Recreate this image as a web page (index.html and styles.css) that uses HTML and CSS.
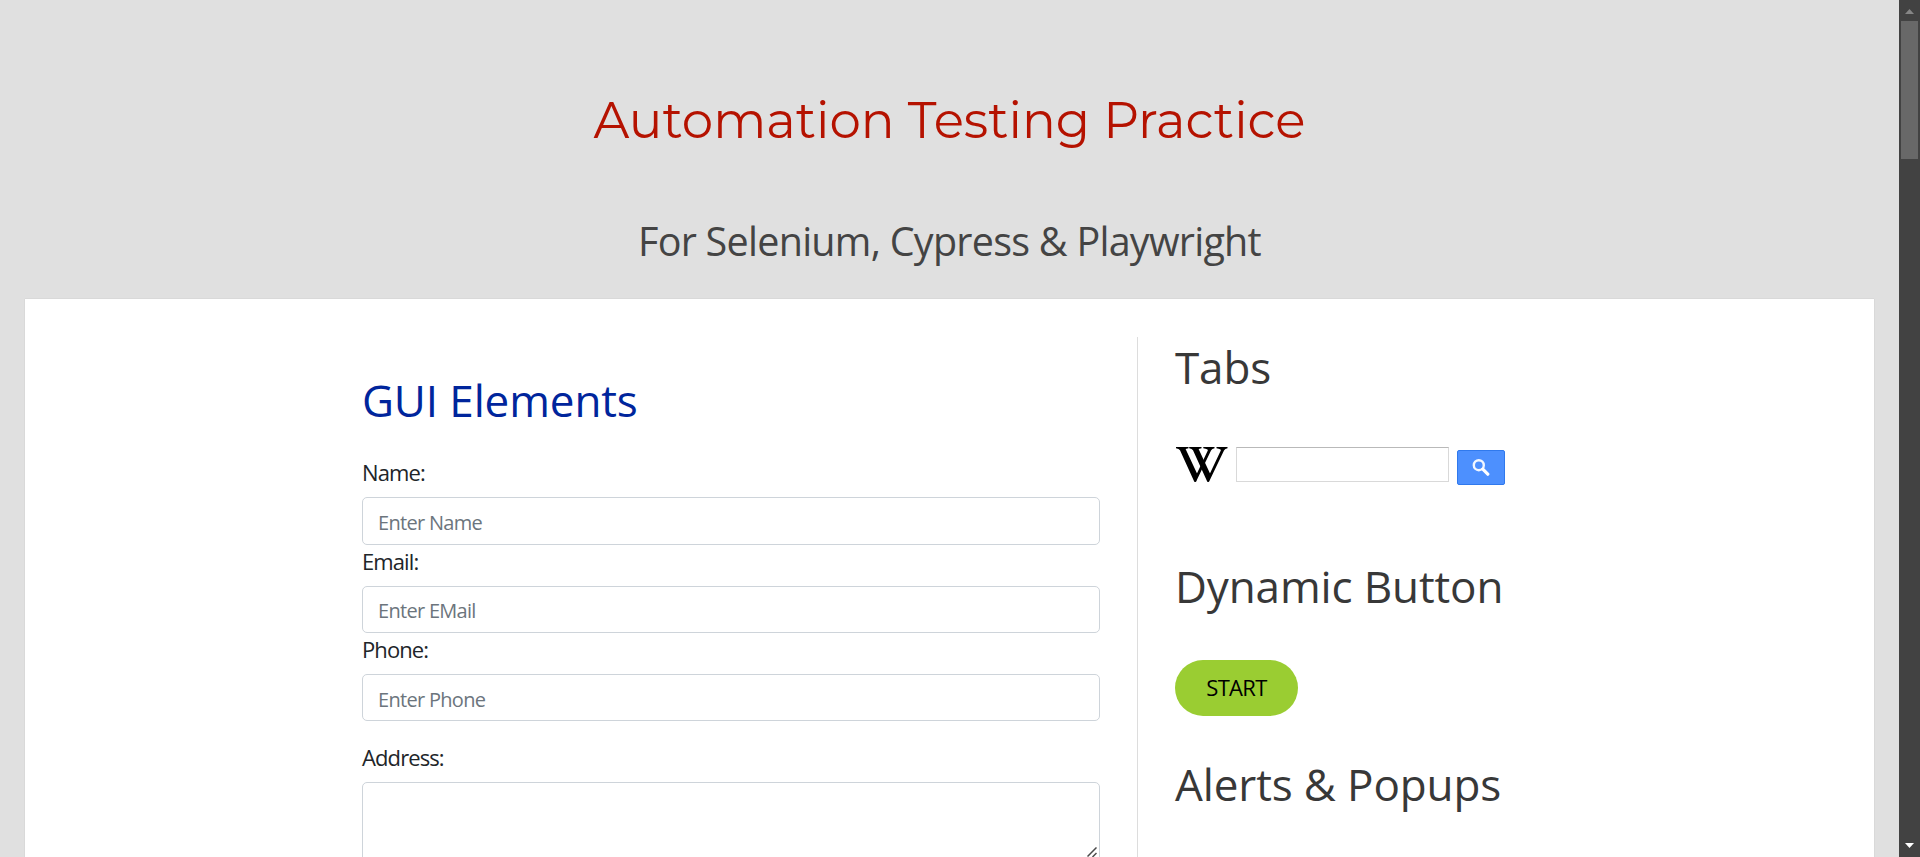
FILE: index.html
```html
<!DOCTYPE html>
<html lang="en">
<head>
<meta charset="utf-8">
<title>Automation Testing Practice</title>
<link rel="stylesheet" href="styles.css">
</head>
<body>
<div class="viewport">
  <div class="page">
    <header class="header">
      <h1 class="title">Automation Testing Practice</h1>
      <p class="subtitle">For Selenium, Cypress &amp; Playwright</p>
    </header>
    <div class="content">
      <main class="main">
        <h2 class="heading heading-main">GUI Elements</h2>
        <form class="form">
          <label class="label" for="name">Name:</label>
          <input class="control" id="name" type="text" placeholder="Enter Name">
          <label class="label" for="email">Email:</label>
          <input class="control" id="email" type="text" placeholder="Enter EMail">
          <label class="label" for="phone">Phone:</label>
          <input class="control" id="phone" type="text" placeholder="Enter Phone">
          <label class="label label-address" for="address">Address:</label>
          <div class="area-wrap">
            <textarea class="control area" id="address"></textarea>
            <svg class="grip" width="10" height="10" viewBox="0 0 10 10"><path d="M0.5 9.5L9.5 0.5M5.5 10L9.5 6" stroke="#4a4a4a" stroke-width="1.5" fill="none"/></svg>
          </div>
        </form>
      </main>
      <aside class="side">
        <h2 class="heading">Tabs</h2>
        <div class="wiki">
          <svg class="wiki-logo" width="52" height="36" viewBox="0 0 52 36">
            <path d="M0 0H12.5V1.2L9.6 2L21.5 27.5L20 34.8H18.3L4 3.2Q3 1.7 0 1.3ZM13.2 0H25.5V1.2L22.6 2L34.5 27.5L32.8 34.8H31.3L17 3.2Q16 1.7 13.2 1.3Z"/>
            <path d="M27.3 0H38.5V1.3Q36 1.8 35 3.5L20 34.8H18.6L18.8 31L31.8 3.6Q32.4 2 27.3 1.3ZM40.5 0H51.5V1.3Q49 1.8 48 3.5L33 34.8H31.6L31.8 31L44.8 3.6Q45.4 2 40.5 1.3Z"/>
          </svg>
          <input class="wiki-input" type="text" aria-label="Search">
          <button class="wiki-button" type="button" aria-label="Search">
            <svg width="18" height="18" viewBox="0 0 18 18"><circle cx="6.8" cy="6.2" r="5" fill="none" stroke="#fff" stroke-opacity=".93" stroke-width="2.4"/><path d="M10.8 10.2L15.8 15.2" stroke="#fff" stroke-width="3.2" stroke-linecap="round"/></svg>
          </button>
        </div>
        <h2 class="heading heading-dynamic">Dynamic Button</h2>
        <button class="start" type="button">START</button>
        <h2 class="heading heading-alerts">Alerts &amp; Popups</h2>
      </aside>
    </div>
  </div>
  <div class="scrollbar">
    <svg class="arrow-up" width="9" height="5" viewBox="0 0 9 5"><path d="M4.5 0L9 5H0Z" fill="#868686"/></svg>
    <div class="thumb"></div>
    <svg class="arrow-down" width="9" height="5" viewBox="0 0 9 5"><path d="M0 0H9L4.5 5Z" fill="#fff"/></svg>
  </div>
</div>
</body>
</html>
```
FILE: styles.css
```css
* { box-sizing: border-box; }
body {
  margin: 0;
  font-family: "Segoe UI", "Open Sans", "Noto Sans", sans-serif;
  color: #212529;
}
.viewport { display: flex; height: 857px; overflow: hidden; background: #e0e0e0; }
.page { flex: 1; padding: 0 25px; height: 857px; overflow: hidden; }
.header { height: 299px; padding-top: 91px; text-align: center; }
.title, .subtitle, .heading { margin: 0; font-weight: 400; white-space: nowrap; }
.title { font-family: Montserrat, Inter, sans-serif; font-size: 50px; line-height: 60px; color: #b51200; }
.subtitle { margin-top: 60px; font-size: 39.5px; line-height: 60px; letter-spacing: -.74px; color: #444; }
.content {
  display: flex;
  height: 700px;
  padding: 38px 0 0 337px;
  background: #fff;
  box-shadow: 0 0 1px rgba(0, 0, 0, .2);
}
.main { width: 776px; border-right: 1px solid #ddd; }
.side { padding-left: 37px; }
.heading { font-family: "Open Sans", sans-serif; font-size: 44px; line-height: 60px; letter-spacing: -.12px; color: #383838; }
.heading-main { margin-top: 33px; color: #00259c; }
.form { display: flex; flex-direction: column; margin-top: 26.3px; }
.label { height: 41px; font-size: 22px; line-height: 32px; letter-spacing: -.9px; }
.control {
  display: block;
  width: 738px;
  height: 47.4px;
  padding: 3px 15px 0;
  border: 1px solid #ced4da;
  border-radius: 5px;
  font-family: inherit;
  font-size: 20px;
  letter-spacing: -.7px;
  outline: none;
  background: #fff;
}
.control::placeholder { color: #6c757d; opacity: 1; }
.label-address { margin-top: 19.5px; }
.area-wrap { position: relative; width: 738px; }
.area { height: 82px; resize: none; }
.grip { position: absolute; right: 3px; top: 65px; }
.wiki { display: flex; align-items: flex-start; margin-top: 50px; }
.wiki-logo { margin-left: 1px; }
.wiki-input { width: 213px; height: 35px; margin-left: 8px; border: 1px solid #d9d9d9; border-top-color: #b9b9b9; }
.wiki-button {
  display: flex;
  align-items: center;
  justify-content: center;
  width: 48px;
  height: 35px;
  margin: 3px 0 0 8px;
  padding: 0;
  border: 1px solid #3079ed;
  border-radius: 2px;
  background: #4d90fe;
}
.heading-dynamic { margin-top: 71px; }
.start {
  display: block;
  width: 123px;
  height: 56px;
  margin-top: 44px;
  padding: 0 0 2px;
  border: 0;
  border-radius: 28px;
  background: #9acd32;
  color: #000;
  font-family: inherit;
  font-size: 22px;
  letter-spacing: -.7px;
}
.heading-alerts { margin-top: 38px; }
.scrollbar {
  display: flex;
  flex-direction: column;
  align-items: center;
  width: 21px;
  padding: 9px 0 4px;
  background: #424242;
}
.thumb { width: 17px; height: 138px; margin-top: 7px; background: #686868; }
.arrow-down { margin-top: auto; margin-bottom: 5px; }
```
